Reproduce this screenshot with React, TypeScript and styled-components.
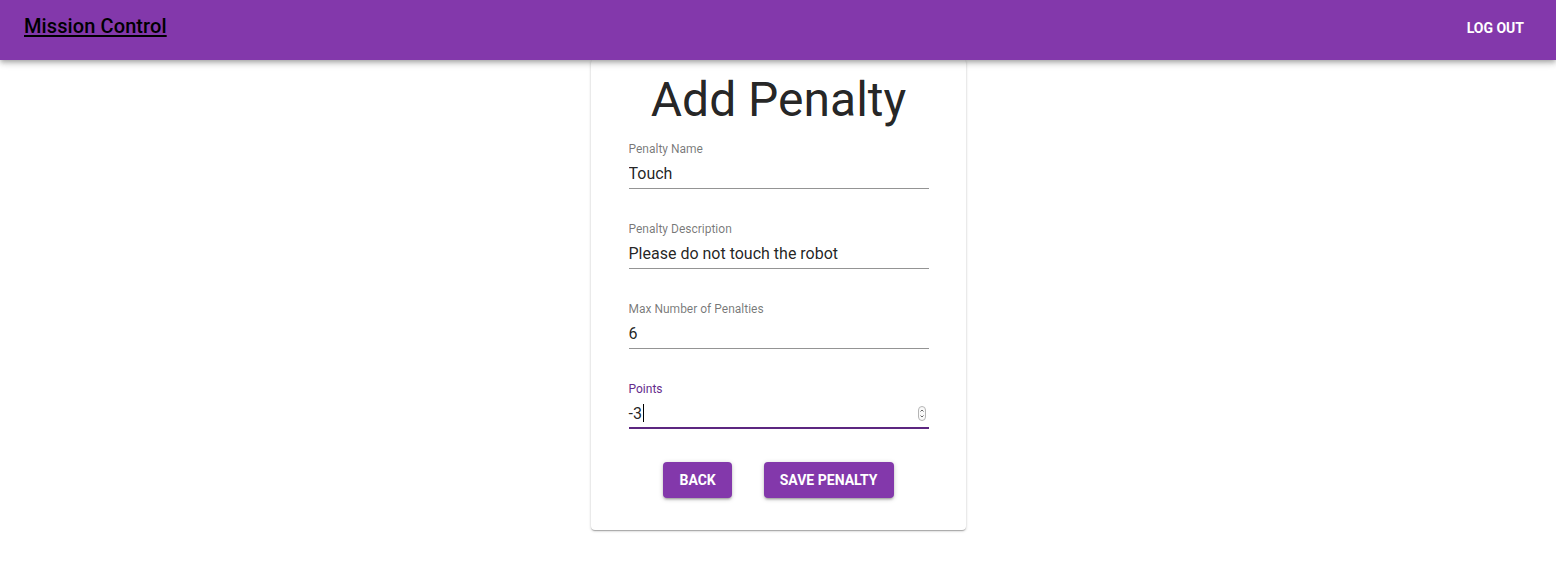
import React from "react";
import styled, { createGlobalStyle } from "styled-components";

const GlobalStyle = createGlobalStyle`
    html, body {
        margin: 0;
        padding: 0;
        background-color: #ffffff;
        font-family: Roboto, "Liberation Sans", Arial, sans-serif;
    }
`;

const Page = styled.div`
    width: 100%;
    min-height: 577px;
    display: flex;
    flex-direction: column;
    position: relative;
`;

const AppBar = styled.header`
    height: 60px;
    box-sizing: border-box;
    padding: 0 24px 8px 24px;
    display: flex;
    flex-direction: row;
    align-items: center;
    justify-content: space-between;
    background-color: #8338ab;
    box-shadow: 0px 2px 4px -1px rgba(0, 0, 0, 0.2), 0px 4px 5px 0px rgba(0, 0, 0, 0.14),
        0px 1px 10px 0px rgba(0, 0, 0, 0.12);
    position: relative;
    z-index: 2;
`;

const Brand = styled.a`
    font-size: 20px;
    font-weight: 500;
    line-height: 20px;
    color: #000000;
    text-decoration: underline;
    text-underline-offset: 2px;
    letter-spacing: 0.1px;
`;

const NavButton = styled.button`
    background: none;
    border: none;
    color: #ffffff;
    font-family: inherit;
    font-size: 14px;
    font-weight: 700;
    line-height: 24px;
    padding: 6px 8px;
    margin-top: 3px;
    text-transform: uppercase;
    cursor: pointer;
`;

const Main = styled.main`
    display: flex;
    flex-direction: row;
    justify-content: center;
    margin-top: -1px;
`;

const Card = styled.div`
    width: 375px;
    box-sizing: border-box;
    background-color: #ffffff;
    border-radius: 4px;
    box-shadow: 0px 1px 3px 0px rgba(0, 0, 0, 0.2), 0px 1px 1px 0px rgba(0, 0, 0, 0.14),
        0px 2px 1px -1px rgba(0, 0, 0, 0.12);
    padding: 16px 37px 32px 38px;
    display: flex;
    flex-direction: column;
`;

const Title = styled.h1`
    margin: 0 0 16px 0;
    font-size: 48px;
    font-weight: 400;
    line-height: 50px;
    text-align: center;
    color: rgba(0, 0, 0, 0.87);
`;

const FieldList = styled.div`
    display: flex;
    flex-direction: column;
    gap: 32px;
`;

const Field = styled.div`
    display: flex;
    flex-direction: column;
`;

const Label = styled.label<{ focused?: boolean }>`
    font-size: 12px;
    line-height: 16px;
    color: ${(props) => (props.focused ? "#662b8c" : "rgba(0, 0, 0, 0.54)")};
`;

const InputRow = styled.div<{ focused?: boolean }>`
    height: 32px;
    box-sizing: border-box;
    display: flex;
    flex-direction: row;
    align-items: center;
    padding-top: 2px;
    border-bottom: ${(props) => (props.focused ? "2px solid #5c2680" : "1px solid rgba(0, 0, 0, 0.42)")};
`;

const Input = styled.input`
    flex: 1;
    border: none;
    outline: none;
    background: none;
    padding: 0;
    font-family: inherit;
    font-size: 16px;
    color: rgba(0, 0, 0, 0.87);
`;

const Value = styled.span`
    font-size: 16px;
    color: rgba(0, 0, 0, 0.87);
`;

const Caret = styled.span`
    width: 1px;
    height: 18px;
    background-color: #000000;
    margin-left: 1px;
`;

const Spacer = styled.span`
    flex: 1;
`;

const Spinner = styled.svg`
    margin-right: 3px;
`;

const ButtonRow = styled.div`
    display: flex;
    flex-direction: row;
    justify-content: center;
    gap: 32px;
    margin-top: 33px;
`;

const ActionButton = styled.button`
    height: 36px;
    padding: 0 16px;
    border: none;
    border-radius: 4px;
    background-color: #8338ab;
    color: #ffffff;
    font-family: inherit;
    font-size: 14px;
    font-weight: 700;
    text-transform: uppercase;
    box-shadow: 0px 1px 5px 0px rgba(0, 0, 0, 0.2), 0px 2px 2px 0px rgba(0, 0, 0, 0.14),
        0px 3px 1px -2px rgba(0, 0, 0, 0.12);
    cursor: pointer;
`;

const fields = [
    { label: "Penalty Name", value: "Touch" },
    { label: "Penalty Description", value: "Please do not touch the robot" },
    { label: "Max Number of Penalties", value: "6" },
];

const App = () => {
    return (
        <Page>
            <GlobalStyle />
            <AppBar>
                <Brand>Mission Control</Brand>
                <NavButton>Log out</NavButton>
            </AppBar>
            <Main>
                <Card>
                    <Title>Add Penalty</Title>
                    <FieldList>
                        {fields.map((f) => (
                            <Field key={f.label}>
                                <Label>{f.label}</Label>
                                <InputRow>
                                    <Input defaultValue={f.value} />
                                </InputRow>
                            </Field>
                        ))}
                        <Field>
                            <Label focused>Points</Label>
                            <InputRow focused>
                                <Value>-3</Value>
                                <Caret />
                                <Spacer />
                                <Spinner width="8" height="15" viewBox="0 0 8 15">
                                    <rect x="0.5" y="0.5" width="7" height="14" rx="3.5" fill="#fafafa" stroke="#b5b5b5" />
                                    <path d="M2.5 5.5 L4 4 L5.5 5.5" fill="none" stroke="#555" strokeWidth="0.9" />
                                    <path d="M2.5 9.5 L4 11 L5.5 9.5" fill="none" stroke="#555" strokeWidth="0.9" />
                                </Spinner>
                            </InputRow>
                        </Field>
                    </FieldList>
                    <ButtonRow>
                        <ActionButton>Back</ActionButton>
                        <ActionButton>Save Penalty</ActionButton>
                    </ButtonRow>
                </Card>
            </Main>
        </Page>
    );
};

export default App;
